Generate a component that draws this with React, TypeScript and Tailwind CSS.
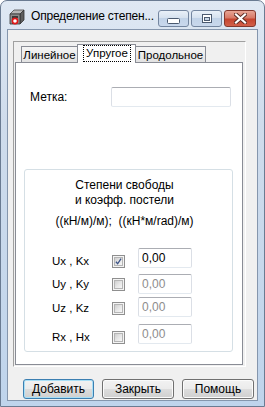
import React from "react";

function AppIcon() {
  return (
    <svg width="16" height="16" viewBox="0 0 16 16" className="shrink-0">
      <polygon points="1,5 5,1 15,1 11,5" fill="#b8b8b8" stroke="#4a4a4a" strokeWidth="0.8" />
      <polygon points="11,5 15,1 15,11 11,15" fill="#5e5e5e" stroke="#333" strokeWidth="0.8" />
      <polygon points="1,5 11,5 11,15 1,15" fill="#8a8a8a" stroke="#333" strokeWidth="0.8" />
      <polygon points="3,7 9,7 9,9 5,9 5,15 3,15" fill="#3a3a3a" />
      <circle cx="6" cy="12" r="2.6" fill="#fff" stroke="#e01818" strokeWidth="1.6" />
    </svg>
  );
}

function MinGlyph() {
  return (
    <svg width="13" height="6" viewBox="0 0 13 6">
      <rect x="0.5" y="0.5" width="12" height="5" rx="1" fill="#fff" stroke="#4b5a70" />
    </svg>
  );
}

function MaxGlyph() {
  return (
    <svg width="10" height="9" viewBox="0 0 10 9">
      <rect x="0.5" y="0.5" width="9" height="8" fill="#fff" stroke="#4b5a70" />
      <rect x="2.5" y="3.5" width="5" height="3" fill="#c9d6e6" stroke="#4b5a70" />
    </svg>
  );
}

function CloseGlyph() {
  return (
    <svg width="13" height="11" viewBox="0 0 13 11">
      <path d="M2 1.5 L11 9.5 M11 1.5 L2 9.5" stroke="#5b2a22" strokeWidth="4" strokeLinecap="square" />
      <path d="M2 1.5 L11 9.5 M11 1.5 L2 9.5" stroke="#ffffff" strokeWidth="2.2" strokeLinecap="square" />
    </svg>
  );
}

function CheckBox({ checked }: { checked?: boolean }) {
  return (
    <div className="w-[13px] h-[13px] border border-[#8f8f8f] bg-[#f4f4f4] p-[1px] shrink-0">
      <div className="w-full h-full border border-[#b5b5b5] bg-[linear-gradient(135deg,#cfcfcf_0%,#e6e6e6_50%,#f7f7f7_100%)] flex items-center justify-center">
        {checked && (
          <svg width="9" height="9" viewBox="0 0 9 9">
            <path d="M1.2 4.8 L3.4 7.4 L7.8 0.8" fill="none" stroke="#3d5487" strokeWidth="1.7" />
          </svg>
        )}
      </div>
    </div>
  );
}

function TextBox({ value, disabled, w }: { value: string; disabled?: boolean; w: string }) {
  return (
    <div
      className={`${w} h-[20px] rounded-[2px] border border-[#abadb3] border-l-[#dbdfe6] border-r-[#dbdfe6] border-b-[#e3e9ef] bg-white flex items-center pl-[3px] text-[12px] ${
        disabled ? "text-[#8d8d8d]" : "text-black"
      }`}
    >
      {value}
    </div>
  );
}

function Row({ label, checked, mt, lmt }: { label: string; checked?: boolean; mt: string; lmt: string }) {
  return (
    <div className={`flex items-start pl-[27px] ${mt}`}>
      <div className={`flex items-center h-[13px] ${lmt}`}>
        <span className="w-[60px] text-[11.5px] leading-[13px]">{label}</span>
        <CheckBox checked={checked} />
      </div>
      <div className="ml-[13px]">
        <TextBox value="0,00" disabled={!checked} w="w-[54px]" />
      </div>
    </div>
  );
}

function Button({ label, def, w }: { label: string; def?: boolean; w: string }) {
  return (
    <div
      className={`${w} h-[20px] rounded-[3px] border flex items-center justify-center text-[12px] bg-[linear-gradient(180deg,#f2f2f2_0%,#ebebeb_50%,#dddddd_50%,#cfcfcf_100%)] ${
        def
          ? "border-[#3c7fb1] shadow-[inset_0_0_0_1px_#a9dff6]"
          : "border-[#707070] shadow-[inset_0_0_0_1px_#fbfbfb]"
      }`}
    >
      {label}
    </div>
  );
}

export default function App() {
  return (
    <div className="w-[265px] h-[407px] font-['Liberation_Sans',Arial,sans-serif] text-black overflow-hidden">
      <div className="w-full h-full flex flex-col rounded-t-[7px] border border-[#6a7b92] bg-[linear-gradient(180deg,#dfe8f3_0%,#cfdcec_30%,#bfd4ec_100%)]">
        {/* Title bar */}
        <div className="h-[28px] shrink-0 flex items-start">
          <div className="ml-[8px] mt-[8px]">
            <AppIcon />
          </div>
          <span className="ml-[6px] mt-[7px] text-[12px] leading-[16px] tracking-[-0.2px] whitespace-nowrap">
            Определение степен...
          </span>
          <div className="ml-auto mr-[8px] mt-[9px] flex gap-[2px]">
            <div className="w-[31px] h-[17px] rounded-[3px] border border-[#7486a0] bg-[linear-gradient(180deg,#e9f0f8_0%,#d4e0ee_50%,#c2d3e8_50%,#c9d8ec_100%)] flex items-end justify-center pb-[2px]">
              <MinGlyph />
            </div>
            <div className="w-[31px] h-[17px] rounded-[3px] border border-[#7486a0] bg-[linear-gradient(180deg,#e9f0f8_0%,#d4e0ee_50%,#c2d3e8_50%,#c9d8ec_100%)] flex items-center justify-center">
              <MaxGlyph />
            </div>
            <div className="w-[32px] h-[17px] rounded-[3px] border border-[#83382d] bg-[linear-gradient(180deg,#e8a595_0%,#d87a68_45%,#c5452f_55%,#d2604a_100%)] flex items-center justify-center">
              <CloseGlyph />
            </div>
          </div>
        </div>

        {/* Client area */}
        <div className="flex-1 mx-[6px] mb-[5px] border border-[#8596ad] bg-[#f0f0f0] flex flex-col">
          {/* Frame */}
          <div className="ml-[5px] mt-[11px] w-[233px] h-[326px] border border-t-[#a0a0a0] border-l-[#a0a0a0] border-r-white border-b-white flex flex-col">
            <div className="ml-[1px] mt-[2px] w-[228px] flex flex-col">
              {/* Tabs */}
              <div className="h-[18px] flex items-end pl-[6px] text-[11.5px]">
                <div className="w-[57px] h-[16px] border border-b-0 border-[#898c95] bg-[linear-gradient(180deg,#f5f5f5_0%,#e2e2e2_100%)] flex items-center justify-center leading-[14px] pt-[1px]">
                  Линейное
                </div>
                <div className="relative z-10 -ml-[1px] -mr-[1px] -mb-[1px] w-[59px] h-[19px] border border-b-0 border-[#898c95] bg-white flex items-start justify-center pl-[1px]">
                  <span className="border border-dotted border-black px-[2px] leading-[15px]">Упругое</span>
                </div>
                <div className="w-[71px] h-[16px] border border-b-0 border-[#898c95] bg-[linear-gradient(180deg,#f5f5f5_0%,#e2e2e2_100%)] flex items-center justify-center leading-[14px] pt-[1px]">
                  Продольное
                </div>
              </div>
              {/* Tab page */}
              <div className="h-[303px] border border-[#898c95] bg-white flex flex-col text-[12px]">
                <div className="mt-[24px] pl-[14px] flex items-center">
                  <span className="w-[81px] leading-[13px] text-[12px]">Метка:</span>
                  <TextBox value="" w="w-[120px]" />
                </div>
                <div className="mt-[62px] ml-[8px] w-[209px] h-[183px] rounded-[3px] border border-[#d5dfe5] flex flex-col">
                  <div className="pt-[8px] pr-[8px] flex flex-col items-center text-[12px] leading-[15px]">
                    <span>Степени свободы</span>
                    <span>и коэфф. постели</span>
                    <span className="mt-[6px] whitespace-pre">((кН/м)/м);  ((кН*м/rad)/м)</span>
                  </div>
                  <Row label="Ux , Kx" checked mt="mt-[19px]" lmt="mt-[7px]" />
                  <Row label="Uy , Ky" mt="mt-[6px]" lmt="mt-[4px]" />
                  <Row label="Uz , Kz" mt="mt-[3px]" lmt="mt-[5px]" />
                  <Row label="Rx , Hx" mt="mt-[7px]" lmt="mt-[7px]" />
                </div>
              </div>
            </div>
          </div>
          {/* Buttons */}
          <div className="mt-[12px] pl-[15px] flex gap-[8px]">
            <Button label="Добавить" def w="w-[71px]" />
            <Button label="Закрыть" w="w-[72px]" />
            <Button label="Помощь" w="w-[72px]" />
          </div>
        </div>
      </div>
    </div>
  );
}
